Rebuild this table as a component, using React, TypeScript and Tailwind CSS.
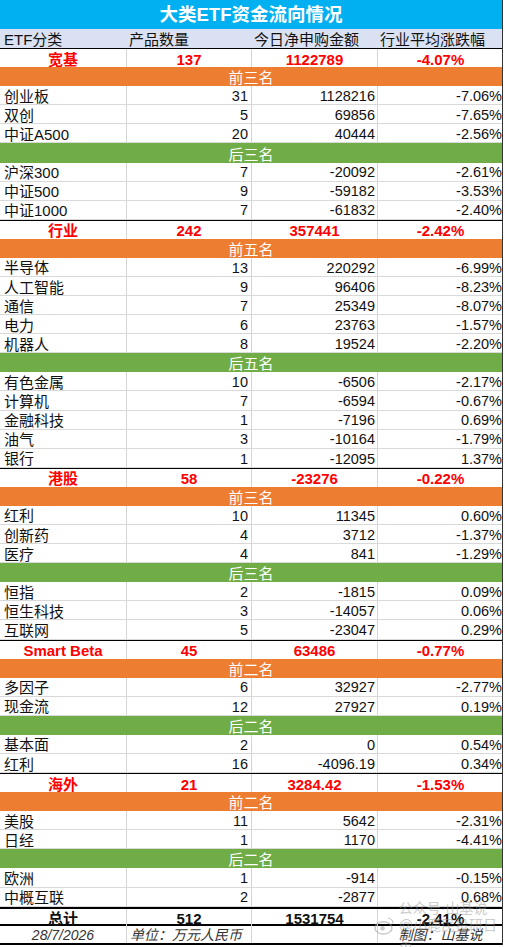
import React from "react";

type Row = [string, number, string, string];

interface Section {
  label: string;
  tone: "orange" | "green";
  rows: Row[];
}

interface Group {
  name: string;
  count: number;
  amount: string;
  pct: string;
  sections: Section[];
}

const groups: Group[] = [
  {
    name: "宽基",
    count: 137,
    amount: "1122789",
    pct: "-4.07%",
    sections: [
      {
        label: "前三名",
        tone: "orange",
        rows: [
          ["创业板", 31, "1128216", "-7.06%"],
          ["双创", 5, "69856", "-7.65%"],
          ["中证A500", 20, "40444", "-2.56%"],
        ],
      },
      {
        label: "后三名",
        tone: "green",
        rows: [
          ["沪深300", 7, "-20092", "-2.61%"],
          ["中证500", 9, "-59182", "-3.53%"],
          ["中证1000", 7, "-61832", "-2.40%"],
        ],
      },
    ],
  },
  {
    name: "行业",
    count: 242,
    amount: "357441",
    pct: "-2.42%",
    sections: [
      {
        label: "前五名",
        tone: "orange",
        rows: [
          ["半导体", 13, "220292", "-6.99%"],
          ["人工智能", 9, "96406", "-8.23%"],
          ["通信", 7, "25349", "-8.07%"],
          ["电力", 6, "23763", "-1.57%"],
          ["机器人", 8, "19524", "-2.20%"],
        ],
      },
      {
        label: "后五名",
        tone: "green",
        rows: [
          ["有色金属", 10, "-6506", "-2.17%"],
          ["计算机", 7, "-6594", "-0.67%"],
          ["金融科技", 1, "-7196", "0.69%"],
          ["油气", 3, "-10164", "-1.79%"],
          ["银行", 1, "-12095", "1.37%"],
        ],
      },
    ],
  },
  {
    name: "港股",
    count: 58,
    amount: "-23276",
    pct: "-0.22%",
    sections: [
      {
        label: "前三名",
        tone: "orange",
        rows: [
          ["红利", 10, "11345", "0.60%"],
          ["创新药", 4, "3712", "-1.37%"],
          ["医疗", 4, "841", "-1.29%"],
        ],
      },
      {
        label: "后三名",
        tone: "green",
        rows: [
          ["恒指", 2, "-1815", "0.09%"],
          ["恒生科技", 3, "-14057", "0.06%"],
          ["互联网", 5, "-23047", "0.29%"],
        ],
      },
    ],
  },
  {
    name: "Smart Beta",
    count: 45,
    amount: "63486",
    pct: "-0.77%",
    sections: [
      {
        label: "前二名",
        tone: "orange",
        rows: [
          ["多因子", 6, "32927", "-2.77%"],
          ["现金流", 12, "27927", "0.19%"],
        ],
      },
      {
        label: "后二名",
        tone: "green",
        rows: [
          ["基本面", 2, "0", "0.54%"],
          ["红利", 16, "-4096.19", "0.34%"],
        ],
      },
    ],
  },
  {
    name: "海外",
    count: 21,
    amount: "3284.42",
    pct: "-1.53%",
    sections: [
      {
        label: "前二名",
        tone: "orange",
        rows: [
          ["美股", 11, "5642", "-2.31%"],
          ["日经", 1, "1170", "-4.41%"],
        ],
      },
      {
        label: "后二名",
        tone: "green",
        rows: [
          ["欧洲", 1, "-914", "-0.15%"],
          ["中概互联", 2, "-2877", "0.68%"],
        ],
      },
    ],
  },
];

const font = {
  fontFamily: '"Liberation Sans", "Noto Sans CJK SC", sans-serif',
};

const cols = "grid grid-cols-[127px_125px_126px_125px]";
const cell = "flex items-center whitespace-nowrap leading-none pt-[2px]";

const GroupRow: React.FC<{ g: Group }> = ({ g }) => (
  <div className={`${cols} h-[19.08px] border-t border-black bg-white text-[15px] font-bold text-[#ff0000]`}>
    <div className={`${cell} justify-center border-r border-[#d4d4d4]`}>{g.name}</div>
    <div className={`${cell} justify-center border-r border-[#d4d4d4]`}>{g.count}</div>
    <div className={`${cell} justify-center border-r border-[#d4d4d4]`}>{g.amount}</div>
    <div className={`${cell} justify-center`}>{g.pct}</div>
  </div>
);

const SectionBar: React.FC<{ s: Section }> = ({ s }) => (
  <div
    className={`flex h-[19.08px] items-center justify-center pt-[2px] text-[15px] leading-none text-white ${
      s.tone === "orange" ? "bg-[#ed7d31]" : "bg-[#70ad47]"
    }`}
  >
    {s.label}
  </div>
);

const DataRow: React.FC<{ r: Row }> = ({ r }) => (
  <div className={`${cols} h-[19.08px] border-b border-[#d9d9d9] bg-white text-[#111]`}>
    <div className={`${cell} border-r border-[#d4d4d4] pl-1 text-[15px]`}>{r[0]}</div>
    <div className={`${cell} justify-end border-r border-[#d4d4d4] pr-[3px] text-[14.5px]`}>{r[1]}</div>
    <div className={`${cell} justify-end border-r border-[#d4d4d4] pr-[2px] text-[14.5px]`}>{r[2]}</div>
    <div className={`${cell} justify-end pr-[1px] text-[14.5px]`}>{r[3]}</div>
  </div>
);

export default function App() {
  return (
    <div className="relative h-[947px] w-[505px] overflow-hidden bg-white" style={font}>
      <div className="w-[503px] border-r border-[#333]">
        <div className="flex h-[29px] items-center justify-center bg-[#00b0f0] pt-[2px] text-[18.5px] font-bold leading-none text-white">
          大类ETF资金流向情况
        </div>
        <div className={`${cols} h-[19.08px] bg-[#d9e1f2] text-[15px] text-[#111]`}>
          <div className={`${cell} pl-1`}>ETF分类</div>
          <div className={`${cell} pl-[2px]`}>产品数量</div>
          <div className={`${cell} pl-[2px]`}>今日净申购金额</div>
          <div className={`${cell} pl-[2px]`}>行业平均涨跌幅</div>
        </div>

        {groups.map((g) => (
          <React.Fragment key={g.name}>
            <GroupRow g={g} />
            {g.sections.map((s) => (
              <React.Fragment key={s.label}>
                <SectionBar s={s} />
                {s.rows.map((r) => (
                  <DataRow key={r[0] + r[2]} r={r} />
                ))}
              </React.Fragment>
            ))}
          </React.Fragment>
        ))}

        <div className={`${cols} h-[19.08px] border-y-2 border-black bg-white text-[15px] font-bold text-[#111]`}>
          <div className={`${cell} justify-center border-r border-[#d4d4d4]`}>总计</div>
          <div className={`${cell} justify-center border-r border-[#d4d4d4]`}>512</div>
          <div className={`${cell} justify-center border-r border-[#d4d4d4]`}>1531754</div>
          <div className={`${cell} justify-center`}>-2.41%</div>
        </div>
        <div className={`${cols} h-[19.08px] border-b-2 border-black bg-white text-[14px] italic text-[#333]`}>
          <div className={`${cell} justify-center border-r border-[#d4d4d4]`}>28/7/2026</div>
          <div className={`${cell} border-r border-[#d4d4d4] pl-[3px]`}>单位：万元人民币</div>
          <div className={`${cell} border-r border-[#d4d4d4]`}></div>
          <div className={`${cell} justify-center`}>制图：山基说</div>
        </div>
      </div>

      {/* watermark */}
      <div className="pointer-events-none absolute left-[374px] top-[900px] flex items-center gap-1 text-[14px] leading-[17px] text-[#9a9a9a] opacity-50">
        <svg width="22" height="20" viewBox="0 0 22 20">
          <ellipse cx="10" cy="12" rx="9" ry="6.5" fill="none" stroke="#999" strokeWidth="1.6" />
          <circle cx="9" cy="12.5" r="2.5" fill="#999" />
          <path d="M15 2a5 5 0 0 1 5 5" fill="none" stroke="#999" strokeWidth="1.4" />
        </svg>
        <div className="flex flex-col">
          <span>公众号·山基说</span>
          <span>@小鹿民投研日常</span>
        </div>
      </div>
    </div>
  );
}
